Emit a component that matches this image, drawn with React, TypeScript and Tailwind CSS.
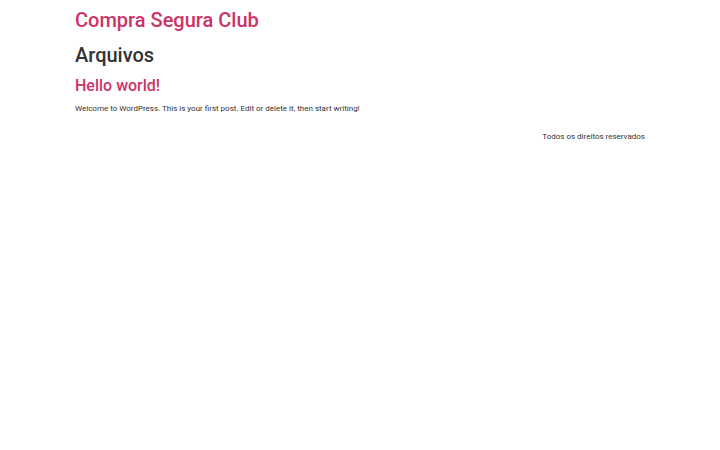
export default function App() {
  return (
    <div className="min-h-[450px] bg-white" style={{ fontFamily: 'Roboto, sans-serif' }}>
      <div className="mx-auto w-[570px]">
        <header className="pt-[6px]">
          <div className="text-[20px] font-medium leading-[28px] text-[#cc3366]">Compra Segura Club</div>
        </header>
        <main>
          <h1 className="mt-[7px] text-[20px] font-medium leading-[28px] text-[#333333]">Arquivos</h1>
          <h2 className="mt-[6px] text-[16px] font-medium leading-[22px] text-[#cc3366]">Hello world!</h2>
          <p className="mt-[6px] text-[8px] leading-[12px] text-[#333333]">Welcome to WordPress. This is your first post. Edit or delete it, then start writing!</p>
        </main>
        <footer className="mt-[16px] flex justify-end">
          <p className="text-[8px] leading-[12px] text-[#333333]">Todos os direitos reservados</p>
        </footer>
      </div>
    </div>
  );
}
